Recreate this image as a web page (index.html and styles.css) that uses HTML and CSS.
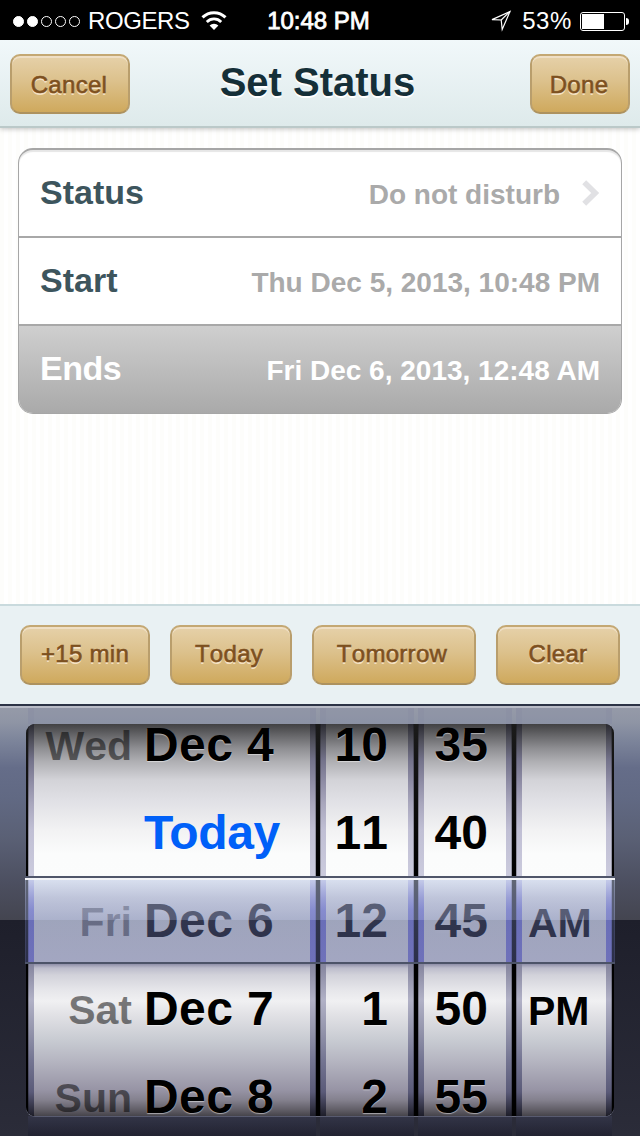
FILE: index.html
```html
<!DOCTYPE html>
<html lang="en">
<head>
    <meta charset="UTF-8">
    <meta name="viewport" content="width=device-width, initial-scale=1.0">
    <title>Set Status</title>
    <link rel="stylesheet" href="styles.css">
</head>
<body>

    <div class="status-bar">
        <div class="carrier">
            <div class="signal"><i class="on"></i><i class="on"></i><i></i><i></i><i></i></div>
            <span class="carrier-name">ROGERS</span>
            <svg class="wifi" width="26" height="20" viewBox="0 0 26 20" fill="none" stroke="#fff">
                <path d="M1.5 6.4a16.3 16.3 0 0 1 23 0" stroke-width="3"/>
                <path d="M5.8 10.9a10.3 10.3 0 0 1 14.4 0" stroke-width="2.8"/>
                <path d="M13 19l-4.4-4.4a6.4 6.4 0 0 1 8.8 0z" fill="#fff" stroke="none"/>
            </svg>
        </div>
        <div class="clock">10:48 PM</div>
        <div class="power">
            <svg width="22" height="22" viewBox="0 0 22 22" fill="none" stroke="#fff" stroke-width="1.2">
                <path d="M20 1.5L2 9.6l9.2.4 1 9.5z"/>
                <path d="M20 1.5L11.2 10"/>
            </svg>
            <span class="percent">53%</span>
            <div class="battery"><div class="charge" style="width: 53%"></div></div>
            <div class="battery-tip"></div>
        </div>
    </div>

    <div class="header">
        <button class="btn cancel">Cancel</button>
        <h1>Set Status</h1>
        <button class="btn done">Done</button>
    </div>

    <div class="content">
        <div class="list">
            <div class="row">
                <span class="label">Status</span>
                <span class="value">Do not disturb</span>
                <svg class="chevron" width="18" height="26" viewBox="0 0 18 26" fill="none" stroke="#e1e1e4" stroke-width="5.6">
                    <path d="M2.2 2.2L13.2 13L2.2 23.8"/>
                </svg>
            </div>
            <div class="row">
                <span class="label">Start</span>
                <span class="value">Thu Dec 5, 2013, 10:48 PM</span>
            </div>
            <div class="row selected">
                <span class="label">Ends</span>
                <span class="value">Fri Dec 6, 2013, 12:48 AM</span>
            </div>
        </div>
    </div>

    <div class="toolbar">
        <button class="btn plus">+15 min</button>
        <button class="btn today-btn">Today</button>
        <button class="btn tomorrow">Tomorrow</button>
        <button class="btn clear">Clear</button>
    </div>

    <div class="picker">
        <div class="wheel-ends top"><i></i><i></i><i></i><i></i></div>
        <div class="wheels">
            <div class="wheel">
                <div class="face dates">
                    <div class="item"><span class="weekday">Wed</span><span>Dec 4</span></div>
                    <div class="item today"><span class="weekday"></span><span>Today</span></div>
                    <div class="item current"><span class="weekday">Fri</span><span>Dec 6</span></div>
                    <div class="item"><span class="weekday">Sat</span><span>Dec 7</span></div>
                    <div class="item"><span class="weekday">Sun</span><span>Dec 8</span></div>
                </div>
            </div>
            <div class="wheel">
                <div class="face hours">
                    <div class="item">10</div>
                    <div class="item">11</div>
                    <div class="item current">12</div>
                    <div class="item">1</div>
                    <div class="item">2</div>
                </div>
            </div>
            <div class="wheel">
                <div class="face minutes">
                    <div class="item">35</div>
                    <div class="item">40</div>
                    <div class="item current">45</div>
                    <div class="item">50</div>
                    <div class="item">55</div>
                </div>
            </div>
            <div class="wheel">
                <div class="face period">
                    <div class="item"></div>
                    <div class="item"></div>
                    <div class="item current">AM</div>
                    <div class="item">PM</div>
                    <div class="item"></div>
                </div>
            </div>
        </div>
        <div class="wheel-ends bottom"><i></i><i></i><i></i><i></i></div>
        <div class="selection"></div>
    </div>

</body>
</html>
```
FILE: styles.css
```css
* {
    box-sizing: border-box;
}

body {
    margin: 0;
    width: 640px;
    height: 1136px;
    overflow: hidden;
    display: flex;
    flex-direction: column;
    font-family: "Liberation Sans", Arial, sans-serif;
    background: #fff;
}

/* status bar */
.status-bar {
    height: 40px;
    flex: none;
    background: #000;
    color: #fff;
    display: grid;
    grid-template-columns: 1fr 104px 1fr;
    align-items: center;
    padding: 0 11px 0 13px;
    font-size: 24px;
    line-height: 42px;
}

.carrier,
.power {
    display: flex;
    align-items: center;
}

.signal {
    display: flex;
    gap: 3px;
    margin-right: 8px;
}

.signal i {
    width: 11px;
    height: 11px;
    border: 1px solid #fff;
    border-radius: 50%;
}

.signal .on {
    background: #fff;
}

.carrier-name {
    width: 103px;
    letter-spacing: -0.4px;
}

.wifi {
    margin-left: 10px;
}

.clock {
    margin-left: -5px;
    text-align: center;
    white-space: nowrap;
    -webkit-text-stroke: 0.8px #fff;
}

.power {
    justify-content: flex-end;
}

.percent {
    margin: 0 8px 0 10px;
    letter-spacing: 0.6px;
}

.battery {
    width: 45px;
    height: 19px;
    border: 1px solid #fff;
    border-radius: 3px;
    padding: 1px;
}

.charge {
    height: 100%;
    background: #fff;
}

.battery-tip {
    width: 3px;
    height: 7px;
    margin-left: 1px;
    background: #fff;
    border-radius: 0 3px 3px 0;
}

/* header */
.header {
    height: 88px;
    flex: none;
    display: grid;
    grid-template-columns: 120px 1fr 120px;
    padding: 14px 10px 0;
    background: linear-gradient(#f1f8fa, #deeaeb);
    border-bottom: 2px solid #bbc9c9;
    box-shadow: 0 1px 5px rgba(0, 0, 0, 0.25);
    z-index: 1;
}

h1 {
    margin: 0;
    padding-right: 5px;
    text-align: center;
    font-size: 40px;
    line-height: 57px;
    color: #152f38;
    text-shadow: 0 2px 0 #fff;
}

.btn {
    height: 60px;
    padding: 0 0 2px;
    border: 2px solid;
    border-color: #c4a873 #b99e6c #ad925f;
    border-radius: 10px;
    background: linear-gradient(#e6d1a9, #dcc18c 45%, #cfa95d);
    box-shadow: inset 0 2px 0 #efdfc5;
    font-family: inherit;
    font-size: 24px;
    font-kerning: none;
    color: #7d501f;
    -webkit-text-stroke: 0.6px #7d501f;
    text-shadow: 0 2px 0 rgba(255, 240, 220, 0.75);
    letter-spacing: 0.3px;
}

.header .btn {
    padding: 1px 2px 0 0;
}

.cancel {
    width: 120px;
}

.done {
    width: 100px;
    justify-self: end;
}

/* settings list */
.content {
    flex: 1;
    padding: 20px 18px;
    background: repeating-linear-gradient(90deg, #fdfdfb 0, #fdfdfb 4px, #fff 4px, #fff 8px);
}

.list {
    height: 266px;
    border: 1px solid #a6a6a6;
    border-top-width: 2px;
    border-radius: 15px;
    background: #fff;
    box-shadow: inset 0 2px 1px #e6e6e6;
    overflow: hidden;
}

.row {
    height: 88px;
    display: flex;
    align-items: center;
    justify-content: space-between;
    padding: 0 21px;
    border-bottom: 2px solid #a8a8a8;
}

.label {
    margin-right: auto;
    padding-bottom: 2px;
    font-size: 34px;
    font-weight: bold;
    color: #3d555d;
}

.value {
    font-size: 28px;
    font-weight: bold;
    color: #aaa;
    padding-top: 3px;
}

.chevron {
    margin: 0 0 0 22px;
}

.selected {
    border-bottom: 0;
    padding-bottom: 2px;
    background: linear-gradient(#cfcfcf, #a9a9a9);
}

.selected .label,
.selected .value {
    color: #fff;
}

.selected .label {
    letter-spacing: -0.5px;
}

/* quick buttons */
.toolbar {
    height: 102px;
    flex: none;
    display: flex;
    gap: 20px;
    padding: 19px 20px 0;
    background: #e9f1f3;
    border-top: 2px solid #c9dadd;
    border-bottom: 2px solid #2c3345;
}

.plus {
    width: 130px;
}

.today-btn {
    width: 122px;
    padding-right: 4px;
}

.tomorrow {
    width: 164px;
    padding-right: 4px;
}

.clear {
    width: 124px;
}

/* date picker */
.picker {
    position: relative;
    height: 430px;
    flex: none;
    padding: 0 26px;
    border-top: 2px solid #b9bcc7;
    background: linear-gradient(#959aa8 0, #8f95a5 14px, #7d859b 32px, #656d89 60px, #616983 90px, #5a6075 130px, #4c4f60 175px, #444550 212px, #1e1f2b 212px, #2b2c39 100%);
}

.wheel-ends,
.wheels {
    display: grid;
    grid-template-columns: 288px 94px 94px 96px;
    gap: 4px;
    padding: 0 2px;
}

.wheel-ends {
    height: 16px;
}

.wheel-ends i {
    border: solid rgba(120, 125, 155, 0.12);
    border-width: 0 6px;
    background: rgba(135, 141, 165, 0.3);
}

.wheel-ends.bottom {
    height: 20px;
}

.wheel-ends.bottom i {
    border: 0;
    background: linear-gradient(rgba(65, 68, 95, 0.4), rgba(20, 22, 38, 0.4));
}

.wheels {
    height: 392px;
    overflow: hidden;
    border-radius: 9px;
    background: linear-gradient(#1b1b1b, #000 150px, #000);
    box-shadow: 0 1px 0 #686a7b;
}

.wheel {
    height: 392px;
    padding: 0 6px;
    background: linear-gradient(#2a2a31 0, #4e4e59 16px, #73728a 36px, #918fa7 60px, #a9a7bd 80px, #c0bfd4 106px, #cbcbdd 152px, #d0d0f0 156px, #8080f4 186px, #8e8cee 238px, #84849d 240px, #b1b1c6 276px, #9495ac 306px, #747592 336px, #5a5a78 368px, #1e1e29 392px);
    box-shadow: inset 1px 0 0 rgba(0, 0, 0, 0.25), inset -1px 0 0 rgba(0, 0, 0, 0.25);
}

.face {
    height: 392px;
    overflow: hidden;
    background: linear-gradient(#414143 0, #68686b 12px, #8d8d91 24px, #b0b0b4 38px, #d3d3d8 56px, #e0e0e5 76px, #f2f2f3 106px, #fbfcfc 130px, #fcfdfd 238px, #8f8fa8 240px, #bcbccb 244px, #d2d2da 251px, #e6e6ea 266px, #f0f0f2 277px, #e2e2e6 290px, #c8cbd2 316px, #b4b4c0 338px, #9794a5 366px, #84818e 376px, #605d66 386px, #46444b 392px);
    font-size: 48px;
    font-weight: bold;
    font-kerning: none;
    color: #000;
}

.item {
    height: 88px;
    line-height: 90px;
    white-space: nowrap;
    text-shadow: 0 1px 1px rgba(255, 255, 255, 0.5);
}

.item:first-child {
    margin-top: -24px;
}

.item.current {
    text-shadow: 0 3px 1px #fff;
}

.dates .item {
    display: flex;
    align-items: baseline;
    letter-spacing: 0.4px;
}

.weekday {
    position: relative;
    top: -1px;
    width: 98px;
    margin-right: 12px;
    flex: none;
    text-align: right;
    font-size: 41px;
    letter-spacing: 0;
    color: rgba(0, 0, 0, 0.5);
    text-shadow: none;
}

.dates .today {
    color: #0060f8;
    font-kerning: normal;
    letter-spacing: -0.4px;
}

.hours {
    text-align: right;
    padding-right: 20px;
}

.minutes {
    text-align: right;
    padding-right: 18px;
}

.period {
    padding: 0 0 0 6px;
    font-size: 41px;
}

.period .item {
    padding-top: 2px;
}

/* glass bar over the chosen row */
.selection {
    position: absolute;
    left: 25px;
    top: 168px;
    width: 590px;
    height: 88px;
    border-top: 2px solid #50566a;
    border-bottom: 2px solid #4c5368;
    background: linear-gradient(#f4f5f8 2px, rgba(184, 196, 226, 0.52) 2px, rgba(150, 159, 195, 0.6) 20px, rgba(129, 138, 178, 0.66) 42px, rgba(86, 95, 137, 0.56) 42px, rgba(83, 89, 140, 0.53) 100%);
}
```
